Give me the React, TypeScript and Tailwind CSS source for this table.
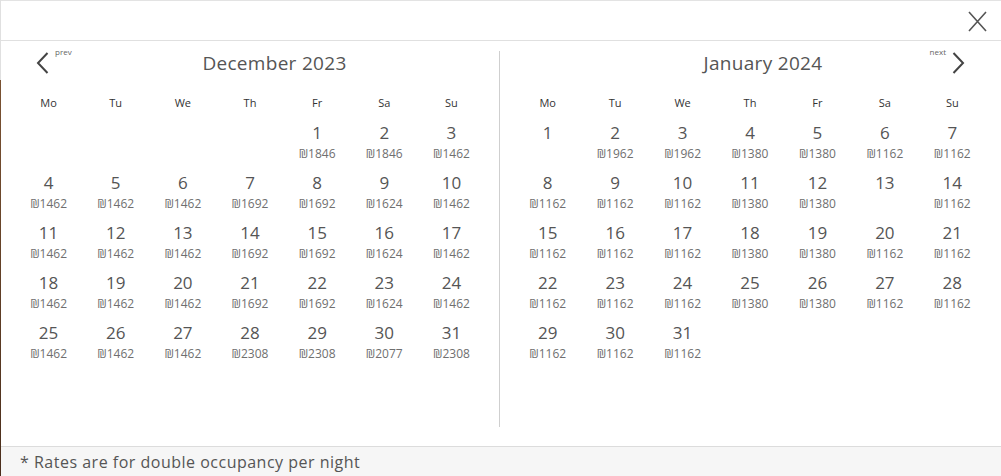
import React from 'react';

type Day = { d: number; p?: number };

const dec: (Day | null)[] = [
  null, null, null, null,
  { d: 1, p: 1846 }, { d: 2, p: 1846 }, { d: 3, p: 1462 },
  { d: 4, p: 1462 }, { d: 5, p: 1462 }, { d: 6, p: 1462 }, { d: 7, p: 1692 }, { d: 8, p: 1692 }, { d: 9, p: 1624 }, { d: 10, p: 1462 },
  { d: 11, p: 1462 }, { d: 12, p: 1462 }, { d: 13, p: 1462 }, { d: 14, p: 1692 }, { d: 15, p: 1692 }, { d: 16, p: 1624 }, { d: 17, p: 1462 },
  { d: 18, p: 1462 }, { d: 19, p: 1462 }, { d: 20, p: 1462 }, { d: 21, p: 1692 }, { d: 22, p: 1692 }, { d: 23, p: 1624 }, { d: 24, p: 1462 },
  { d: 25, p: 1462 }, { d: 26, p: 1462 }, { d: 27, p: 1462 }, { d: 28, p: 2308 }, { d: 29, p: 2308 }, { d: 30, p: 2077 }, { d: 31, p: 2308 },
];

const jan: (Day | null)[] = [
  { d: 1 }, { d: 2, p: 1962 }, { d: 3, p: 1962 }, { d: 4, p: 1380 }, { d: 5, p: 1380 }, { d: 6, p: 1162 }, { d: 7, p: 1162 },
  { d: 8, p: 1162 }, { d: 9, p: 1162 }, { d: 10, p: 1162 }, { d: 11, p: 1380 }, { d: 12, p: 1380 }, { d: 13 }, { d: 14, p: 1162 },
  { d: 15, p: 1162 }, { d: 16, p: 1162 }, { d: 17, p: 1162 }, { d: 18, p: 1380 }, { d: 19, p: 1380 }, { d: 20, p: 1162 }, { d: 21, p: 1162 },
  { d: 22, p: 1162 }, { d: 23, p: 1162 }, { d: 24, p: 1162 }, { d: 25, p: 1380 }, { d: 26, p: 1380 }, { d: 27, p: 1162 }, { d: 28, p: 1162 },
  { d: 29, p: 1162 }, { d: 30, p: 1162 }, { d: 31, p: 1162 },
];

const weekdays = ['Mo', 'Tu', 'We', 'Th', 'Fr', 'Sa', 'Su'];

function Chevron({ dir }: { dir: 'left' | 'right' }) {
  return (
    <svg width="13" height="22" viewBox="0 0 13 22" fill="none" stroke="#444" strokeWidth="2">
      {dir === 'left' ? <path d="M11.5 1 L2 11 L11.5 21" /> : <path d="M1.5 1 L11 11 L1.5 21" />}
    </svg>
  );
}

function Month({ days }: { days: (Day | null)[] }) {
  return (
    <div className="grid grid-cols-7">
      {weekdays.map((w) => (
        <div key={w} className="text-center text-[11px] leading-[16px] text-[#333] mt-[20px]">
          {w}
        </div>
      ))}
      {days.map((day, i) => (
        <div key={i} className={`h-[50px] text-center pt-[4px] ${i < 7 ? 'mt-[7px]' : ''}`}>
          {day && (
            <>
              <div className="text-[17px] leading-[22px] text-[#555]">{day.d}</div>
              {day.p && (
                <div className="mt-[2px] text-[12px] leading-[16px] text-[#6f6f6f]">₪{day.p}</div>
              )}
            </>
          )}
        </div>
      ))}
    </div>
  );
}

export default function App() {
  return (
    <div
      className="w-[1001px] h-[476px] flex bg-white"
      style={{ fontFamily: '"Open Sans", "DejaVu Sans", sans-serif' }}
    >
      <div className="w-px shrink-0 bg-[linear-gradient(to_bottom,#e0e0e0_0px,#e0e0e0_80px,#7a5232_80px,#4a2e1c_476px)]" />
      <div className="flex-1 flex flex-col border-t border-[#e3e3e3]">
        <div className="h-[40px] shrink-0 border-b border-[#e0e0e0] flex justify-end items-start pt-[10px] pr-[14px]">
          <svg width="19" height="21" viewBox="0 0 19 21" stroke="#555" strokeWidth="1.6">
            <path d="M1 1 L18 20 M18 1 L1 20" />
          </svg>
        </div>
        <div className="flex-1 flex pt-[10px] pb-[19px]">
          <div className="w-[499px] border-r border-[#cfcfcf] px-[14px]">
            <div className="h-[24px] flex items-center">
              <div className="w-[58px] ml-[21px] flex items-start">
                <Chevron dir="left" />
                <span className="ml-[6px] -mt-[6px] text-[8px] text-[#666]">prev</span>
              </div>
              <div className="flex-1 text-center text-[19px] tracking-[0.3px] text-[#555] pt-[1px]">December 2023</div>
              <div className="w-[30px]" />
            </div>
            <Month days={dec} />
          </div>
          <div className="w-[500px] px-[14px]">
            <div className="h-[24px] flex items-center">
              <div className="w-[84px]" />
              <div className="flex-1 text-center text-[19px] tracking-[0.3px] text-[#555] pt-[1px]">January 2024</div>
              <div className="w-[37px] mr-[21px] flex items-start justify-end">
                <span className="mr-[6px] -mt-[6px] text-[8px] text-[#666]">next</span>
                <Chevron dir="right" />
              </div>
            </div>
            <Month days={jan} />
          </div>
        </div>
        <div className="h-[30px] shrink-0 border-t border-[#dcdcdc] bg-[#f6f6f6] flex items-center pl-[19px] text-[16px] tracking-[0.5px] text-[#555]">
          * Rates are for double occupancy per night
        </div>
      </div>
    </div>
  );
}
